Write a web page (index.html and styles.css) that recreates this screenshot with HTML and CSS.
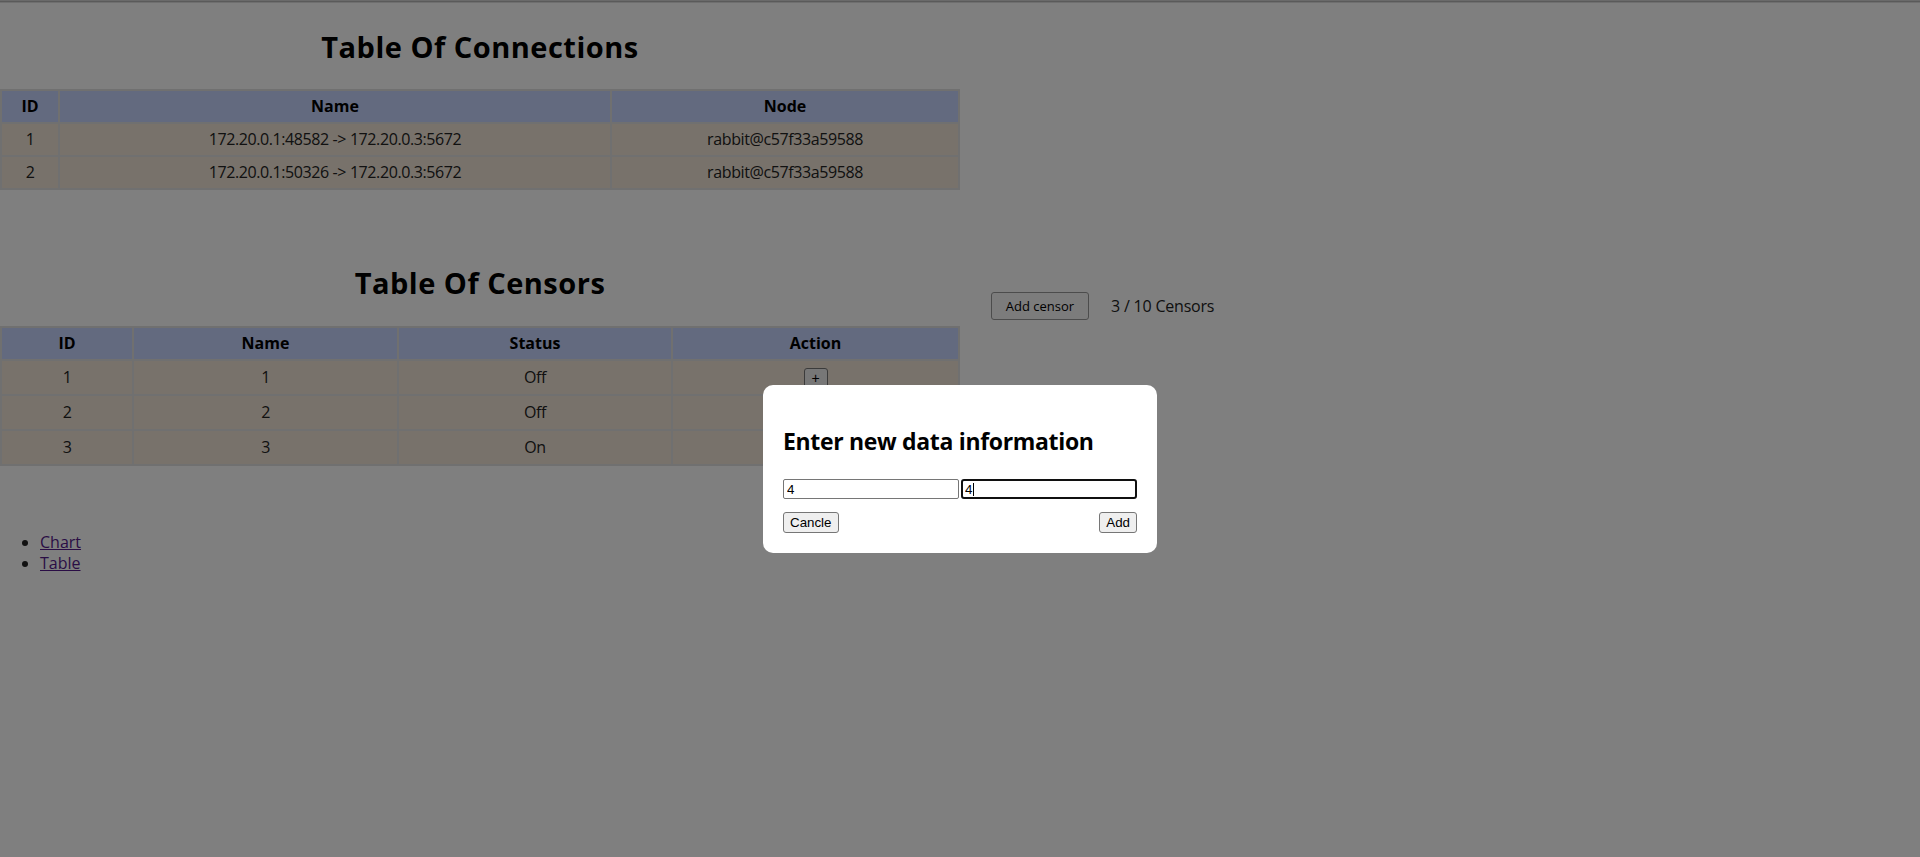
FILE: index.html
```html
<!DOCTYPE html>
<html lang="en">
<head>
<meta charset="utf-8">
<title>Connections</title>
<link rel="stylesheet" href="styles.css">
</head>
<body>
<div class="topline"></div>
<main class="page">
  <section class="conn">
    <h1 class="title">Table Of Connections</h1>
    <table class="grid">
      <colgroup><col class="w-conn-id"><col class="w-conn-name"><col class="w-conn-node"></colgroup>
      <thead><tr><th>ID</th><th>Name</th><th>Node</th></tr></thead>
      <tbody>
        <tr><td>1</td><td>172.20.0.1:48582 -&gt; 172.20.0.3:5672</td><td>rabbit@c57f33a59588</td></tr>
        <tr><td>2</td><td>172.20.0.1:50326 -&gt; 172.20.0.3:5672</td><td>rabbit@c57f33a59588</td></tr>
      </tbody>
    </table>
  </section>

  <section class="censors">
    <div class="censors-main">
      <h1 class="title">Table Of Censors</h1>
      <table class="grid grid-censors">
        <colgroup><col class="w-cen-id"><col class="w-cen-name"><col class="w-cen-status"><col class="w-cen-action"></colgroup>
        <thead><tr><th>ID</th><th>Name</th><th>Status</th><th>Action</th></tr></thead>
        <tbody>
          <tr><td>1</td><td>1</td><td>Off</td><td><button class="plus-btn">+</button></td></tr>
          <tr><td>2</td><td>2</td><td>Off</td><td><button class="plus-btn">+</button></td></tr>
          <tr><td>3</td><td>3</td><td>On</td><td><button class="plus-btn">+</button></td></tr>
        </tbody>
      </table>
    </div>
    <div class="censors-tools">
      <button class="add-btn">Add censor</button>
      <span class="count">3 / 10 Censors</span>
    </div>
  </section>

  <ul class="nav">
    <li><a class="nav-link" href="#">Chart</a></li>
    <li><a class="nav-link" href="#">Table</a></li>
  </ul>
</main>

<div class="backdrop"></div>
<div class="modal">
  <h2 class="modal-title">Enter new data information</h2>
  <div class="modal-fields">
    <input class="field" type="text" value="4">
    <span class="field-wrap">
      <input class="field field-focus" type="text" value="4">
      <span class="caret"></span>
    </span>
  </div>
  <div class="modal-actions">
    <button class="sys-btn">Cancle</button>
    <button class="sys-btn">Add</button>
  </div>
</div>
</body>
</html>
```

FILE: styles.css
```css
html, body {
  margin: 0;
  padding: 0;
  background: #ffffff;
}

body {
  font-family: "Open Sans", "Noto Sans", sans-serif;
  font-size: 16px;
  color: #222;
}

.topline {
  height: 3px;
  background: linear-gradient(#d4d4d4 0 1px, #b4b4b4 1px 2px, #dedede 2px 3px);
}

.page {
  display: flex;
  flex-direction: column;
}

.conn,
.censors-main {
  width: 960px;
}

.title {
  margin: 25px 0 23px;
  font-size: 29px;
  line-height: 38px;
  letter-spacing: 0.5px;
  font-weight: 700;
  text-align: center;
  color: #000;
}

.censors-main .title {
  margin-bottom: 24px;
}

.grid {
  width: 960px;
  table-layout: fixed;
  border-collapse: separate;
  border-spacing: 2px;
  background: #e0e0e0;
}

.grid th,
.grid td {
  padding: 5px;
  line-height: 21px;
  text-align: center;
  white-space: nowrap;
}

.grid th {
  background: #c6d4fe;
  font-weight: 700;
  color: #000;
}

.grid td {
  background: #f0e4d6;
  color: #222;
  letter-spacing: -0.4px;
}

.grid-censors td {
  height: 23px;
  padding-top: 5px;
  padding-bottom: 5px;
}

.w-conn-id { width: 56px; }
.w-conn-name { width: 550px; }
.w-conn-node { width: 346px; }

.w-cen-id { width: 130px; }
.w-cen-name { width: 263px; }
.w-cen-status { width: 272px; }
.w-cen-action { width: 285px; }

.plus-btn {
  box-sizing: border-box;
  width: 24px;
  height: 20px;
  padding: 0;
  font-family: "Liberation Sans", Arial, sans-serif;
  font-size: 14px;
  line-height: 16px;
  color: #000;
  background: #efefef;
  border: 1px solid #767676;
  border-radius: 3px;
  vertical-align: middle;
}

.censors {
  display: flex;
  margin-top: 49px;
}

.censors-tools {
  display: flex;
  align-items: center;
  align-self: flex-start;
  gap: 22px;
  margin-left: 31px;
  padding-top: 53px;
}

.add-btn {
  box-sizing: border-box;
  width: 98px;
  height: 28px;
  padding: 0;
  font-family: "Open Sans", sans-serif;
  font-size: 13px;
  color: #000;
  background: #f8f8f8;
  border: 1px solid #999;
  border-radius: 3px;
}

.count {
  font-size: 16px;
  line-height: 21px;
  letter-spacing: -0.2px;
  color: #222;
}

.nav {
  margin: 66px 0 0;
  padding-left: 40px;
  line-height: 21px;
}

.nav-link {
  color: #551a8b;
  text-decoration: underline;
}

.backdrop {
  position: fixed;
  inset: 0;
  background: rgba(0, 0, 0, 0.5);
}

.modal {
  position: fixed;
  top: 385px;
  left: 50%;
  transform: translateX(-50%);
  padding: 0 20px 20px;
  background: #fff;
  border-radius: 10px;
}

.modal-title {
  margin: 40px 0 22px;
  font-size: 23px;
  line-height: 32px;
  letter-spacing: -0.33px;
  font-weight: 700;
  color: #000;
  white-space: nowrap;
}

.modal-fields {
  display: flex;
  gap: 2px;
}

.field-wrap {
  position: relative;
  display: block;
}

.field {
  display: block;
  box-sizing: border-box;
  width: 176px;
  height: 20px;
  margin: 0;
  padding: 1px 3px;
  font-family: "Liberation Sans", Arial, sans-serif;
  font-size: 13.33px;
  color: #000;
  background: #fff;
  border: 1px solid #767676;
  border-radius: 2px;
  outline: none;
}

.field-focus {
  border: 2px solid #101010;
  border-radius: 3px;
  padding: 0 2px;
}

.caret {
  position: absolute;
  left: 12px;
  top: 4px;
  width: 1px;
  height: 13px;
  background: #000;
}

.modal-actions {
  display: flex;
  justify-content: space-between;
  margin-top: 13px;
}

.sys-btn {
  box-sizing: border-box;
  height: 21px;
  padding: 0 6px;
  font-family: "Liberation Sans", Arial, sans-serif;
  font-size: 13.33px;
  color: #000;
  background: #efefef;
  border: 1px solid #767676;
  border-radius: 3px;
}
```
